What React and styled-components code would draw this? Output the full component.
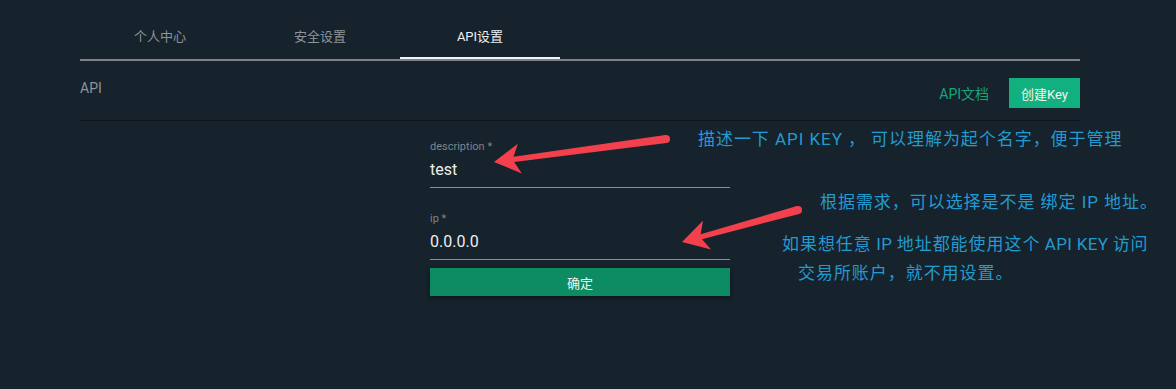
import styled, { createGlobalStyle } from 'styled-components';

const GlobalStyle = createGlobalStyle`
  html, body {
    margin: 0;
    padding: 0;
    background: #16222c;
  }
  body {
    font-family: Roboto, "Noto Sans CJK SC", sans-serif;
    min-height: 100vh;
  }
`;

const Page = styled.div`
  position: relative;
  min-height: 389px;
  padding-left: 80px;
`;

const Container = styled.div`
  width: 1000px;
`;

const TabBar = styled.ul`
  display: flex;
  margin: 0;
  padding: 0;
  list-style: none;
  border-bottom: 2px solid #7e8286;
`;

const Tab = styled.li`
  width: 160px;
  box-sizing: border-box;
  padding-top: 27px;
  height: 59px;
  text-align: center;
  font-size: 13px;
  line-height: 20px;
  color: ${(p) => (p.$active ? '#eef0f1' : '#8d949a')};
  border-bottom: 2px solid ${(p) => (p.$active ? '#f2f2f2' : 'transparent')};
`;

const Header = styled.div`
  display: flex;
  align-items: flex-start;
  justify-content: space-between;
  height: 60px;
  box-sizing: border-box;
  padding-top: 17px;
  border-bottom: 1px solid #0e171e;
`;

const Title = styled.h2`
  margin: 0;
  font-size: 14px;
  font-weight: 400;
  line-height: 20px;
  color: #8b959c;
`;

const Actions = styled.div`
  display: flex;
  align-items: center;
  gap: 20px;
`;

const DocLink = styled.a`
  font-size: 14px;
  color: #15a67b;
  text-decoration: none;
`;

const CreateButton = styled.button`
  height: 30px;
  padding: 0 12px;
  border: none;
  border-radius: 0;
  background: #13b07f;
  color: #f2f4f3;
  font-family: inherit;
  font-size: 13px;
`;

const Form = styled.form`
  width: 300px;
  margin: 19px 0 0 350px;
  display: flex;
  flex-direction: column;
`;

const Field = styled.div`
  display: flex;
  flex-direction: column;
  margin-top: ${(p) => p.$gap || 0}px;
  border-bottom: 1px solid #8a8f93;
  padding-bottom: 6px;
`;

const Label = styled.label`
  font-size: 11px;
  line-height: 14px;
  color: #7b848b;
`;

const Value = styled.div`
  margin-top: 5px;
  font-size: 16px;
  line-height: 22px;
  color: #eceeef;
`;

const Submit = styled.button`
  margin-top: 8px;
  height: 28px;
  border: none;
  background: #0d8b63;
  color: #f1f3f2;
  font-family: inherit;
  font-size: 13px;
  box-shadow: 0 2px 4px rgba(0, 0, 0, 0.45);
`;

const Note = styled.div`
  position: absolute;
  left: ${(p) => p.$x}px;
  top: ${(p) => p.$y}px;
  white-space: nowrap;
  font-size: 17px;
  line-height: 20px;
  letter-spacing: 0.95px;
  color: #239bd0;
`;

const Latin = styled.span`
  letter-spacing: 0.3px;
`;

const Overlay = styled.svg`
  position: absolute;
  left: 0;
  top: 0;
  pointer-events: none;
`;

// arrow polygon from tail to tip, tapering shaft and notched head
const arrowPoints = (tail, tip) => {
  const dx = tip[0] - tail[0];
  const dy = tip[1] - tail[1];
  const len = Math.hypot(dx, dy);
  const u = [dx / len, dy / len];
  const n = [-u[1], u[0]];
  const at = (d, w) => [tip[0] - u[0] * d + n[0] * w, tip[1] - u[1] * d + n[1] * w];
  const pts = [
    tip,
    at(26, -15),
    at(20, -2.6),
    [tail[0] + n[0] * -4, tail[1] + n[1] * -4],
    [tail[0] + n[0] * 4, tail[1] + n[1] * 4],
    at(20, 2.6),
    at(26, 15),
  ];
  return pts.map((p) => p.map((v) => v.toFixed(1)).join(',')).join(' ');
};

const Arrow = ({ tail, tip }) => (
  <g fill="#f2404d">
    <polygon points={arrowPoints(tail, tip)} />
    <circle cx={tail[0]} cy={tail[1]} r="4" />
  </g>
);

const tabs = ['个人中心', '安全设置', 'API设置'];

const App = () => {
  return (
    <>
      <GlobalStyle />
      <Page>
        <Container>
          <TabBar>
            {tabs.map((t) => (
              <Tab key={t} $active={t === 'API设置'}>
                {t}
              </Tab>
            ))}
          </TabBar>
          <Header>
            <Title>API</Title>
            <Actions>
              <DocLink href="#">API文档</DocLink>
              <CreateButton type="button">创建Key</CreateButton>
            </Actions>
          </Header>
          <Form onSubmit={(e) => e.preventDefault()}>
            <Field>
              <Label>description *</Label>
              <Value>test</Value>
            </Field>
            <Field $gap={24}>
              <Label>ip *</Label>
              <Value>0.0.0.0</Value>
            </Field>
            <Submit type="submit">确定</Submit>
          </Form>
        </Container>

        <Note $x={698} $y={129}>描述一下 API KEY ， 可以理解为起个名字，便于管理</Note>
        <Note $x={820} $y={192}>根据需求，可以选择是不是 绑定 IP 地址。</Note>
        <Note $x={782} $y={234}>
          如果想任意<Latin> IP </Latin>地址都能使用这个<Latin> API KEY </Latin>访问
        </Note>
        <Note $x={798} $y={263}>交易所账户，就不用设置。</Note>

        <Overlay width="1176" height="389">
          <Arrow tail={[666, 139]} tip={[494, 162]} />
          <Arrow tail={[798, 210]} tip={[682, 242]} />
        </Overlay>
      </Page>
    </>
  );
};

export default App;
